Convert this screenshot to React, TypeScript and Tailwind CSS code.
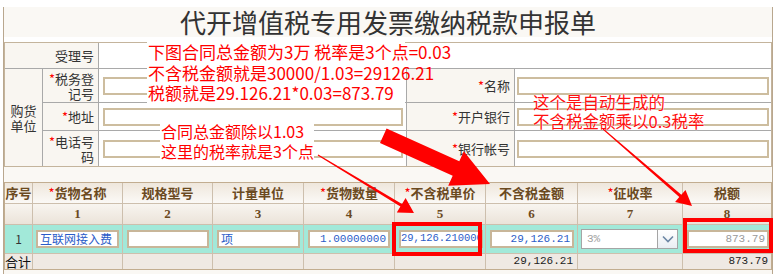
import React from "react";

const Star = () => <span className="text-[#ff0000] font-normal">*</span>;

const Label = ({ text, star, className = "" }: { text: string; star?: boolean; className?: string }) => (
  <div className={`bg-[#f9f6f1] flex items-center justify-end text-right pr-[4px] text-[13px] leading-[15px] text-[#333] ${className}`}>
    <span>
      {star && <Star />}
      {text}
    </span>
  </div>
);

const Field = ({ wide }: { wide?: boolean }) => (
  <div className={`bg-white flex items-center ${wide ? "pl-[2px] pr-[2px]" : "pl-[4px] pr-[3px]"}`}>
    <div className="h-[18px] w-full border-2 border-[#cdbd9f] bg-white" />
  </div>
);

const heads: [string, boolean][] = [
  ["序号", false],
  ["货物名称", true],
  ["规格型号", false],
  ["计量单位", false],
  ["货物数量", true],
  ["不含税单价", true],
  ["不含税金额", false],
  ["征收率", true],
  ["税额", false],
];

const Box = ({ children, className = "" }: { children?: React.ReactNode; className?: string }) => (
  <div
    className={`h-[18px] w-full border-2 border-[#c8b699] bg-white flex items-center overflow-hidden whitespace-nowrap px-[2px] ${className}`}
  >
    {children}
  </div>
);

const DataCell = ({ children, className = "" }: { children?: React.ReactNode; className?: string }) => (
  <div className={`bg-[#a2e9d9] flex items-center px-[3px] ${className}`}>{children}</div>
);

export default function App() {
  return (
    <div className="w-[775px] h-[274px] bg-white relative overflow-hidden font-['Noto_Sans_CJK_SC',sans-serif]">
      <div className="ml-[3px] w-[770px] h-[274px] border-l border-r border-[#b9a78e]">
        {/* title */}
        <div className="mt-[7px] h-[30px] bg-[#faf8f4] flex items-center justify-center text-[26px] text-[#333] leading-none">
          代开增值税专用发票缴纳税款申报单
        </div>

        {/* purchaser block */}
        <div className="mt-[5px] grid grid-cols-[37px_55px_307px_107px_256px] grid-rows-[25px_33px_27px_35px] gap-px bg-[#a9a9a9] border border-[#c4b49c]">
          <Label text="受理号" className="col-span-2" />
          <div className="col-span-3 bg-white" />

          <div className="row-span-3 bg-[#f9f6f1] flex items-center justify-center text-center text-[13px] leading-[15px] text-[#333] px-[5px]">
            购货单位
          </div>
          <Label text="税务登记号" star />
          <Field />
          <Label text="名称" star />
          <Field wide />

          <Label text="地址" star />
          <Field />
          <Label text="开户银行" star />
          <Field wide />

          <Label text="电话号码" star />
          <Field />
          <Label text="银行帐号" star />
          <Field wide />
        </div>

        <div className="h-[15px] bg-[#faf8f4]" />

        {/* goods table */}
        <div className="grid grid-cols-[27px_89px_89px_90px_90px_90px_91px_104px_88px] grid-rows-[20px_20px_28px_15px] gap-px bg-[#cdbfad] border border-[#c2ad90]">
          {heads.map(([t, s]) => (
            <div
              key={t}
              className="bg-linear-to-b from-[#efe7dc] to-[#fbf9f6] flex items-center justify-center text-[13px] font-bold text-[#6b4a1f] whitespace-nowrap"
            >
              {s && <Star />}
              {t}
            </div>
          ))}
          {["", "1", "2", "3", "4", "5", "6", "7", "8"].map((n, i) => (
            <div
              key={i}
              className="bg-linear-to-b from-[#f8f5f0] to-[#ebe3d9] flex items-center justify-center text-[13px] font-bold text-[#6b4a1f] font-['Liberation_Serif',serif]"
            >
              {n}
            </div>
          ))}

          <DataCell className="justify-center text-[12px] text-[#333]">1</DataCell>
          <DataCell>
            <Box className="text-[12px] text-[#2a5cc8]">互联网接入费</Box>
          </DataCell>
          <DataCell className="pl-[4px]">
            <Box />
          </DataCell>
          <DataCell className="pl-[4px]">
            <Box className="text-[12px] text-[#2a5cc8]">项</Box>
          </DataCell>
          <DataCell className="pl-[4px] pr-[4px]">
            <Box className="justify-end font-['Liberation_Mono',monospace] text-[11px] text-[#2a5cc8]">1.00000000</Box>
          </DataCell>
          <DataCell className="pl-[4px] pr-[2px]">
            <Box className="!px-0 font-['Liberation_Mono',monospace] text-[10.5px] text-[#2a5cc8]">29,126.210000</Box>
          </DataCell>
          <DataCell className="pl-[4px] pr-[3px]">
            <Box className="justify-end font-['Liberation_Mono',monospace] text-[11px] text-[#2a5cc8]">29,126.21</Box>
          </DataCell>
          <DataCell className="pl-[3px] pr-[4px]">
            <div className="h-[20px] w-full border border-[#a5a5a5] bg-white flex items-center">
              <span className="flex-1 pl-[5px] font-['Liberation_Mono',monospace] text-[11px] text-[#a0a0a0]">3%</span>
              <div className="w-[20px] h-full border-l border-[#a5a5a5] bg-linear-to-b from-white to-[#e9eef3] flex items-center justify-center">
                <svg width="12" height="8" viewBox="0 0 12 8">
                  <polyline points="1,1.5 6,6.5 11,1.5" fill="none" stroke="#6c86a4" strokeWidth="1.6" />
                </svg>
              </div>
            </div>
          </DataCell>
          <DataCell className="pl-[4px] pr-[2px]">
            <Box className="justify-end bg-[#efefef] font-['Liberation_Mono',monospace] text-[11px] text-[#9a9a9a]">873.79</Box>
          </DataCell>

          <div className="bg-[#efe9e3] flex items-center text-[13px] text-[#111] leading-none">合计</div>
          <div className="bg-[#efe9e3]" />
          <div className="bg-[#efe9e3]" />
          <div className="bg-[#efe9e3]" />
          <div className="bg-[#efe9e3]" />
          <div className="bg-[#efe9e3]" />
          <div className="bg-[#efe9e3] flex items-center justify-end pr-[4px] font-['Liberation_Mono',monospace] text-[11px] text-[#222]">
            29,126.21
          </div>
          <div className="bg-[#efe9e3]" />
          <div className="bg-[#efe9e3] flex items-center justify-end pr-[3px] font-['Liberation_Mono',monospace] text-[11px] text-[#222]">
            873.79
          </div>
        </div>
        <div className="h-[4px] bg-[#faf8f4]" />
      </div>

      {/* annotations */}
      <div className="absolute left-[147px] top-[42px] w-[258px] bg-white text-[17px] leading-[20.5px] text-[#ff0000] whitespace-nowrap pl-[1px]">
        <div>下图合同总金额为3万 税率是3个点=0.03</div>
        <div>不含税金额就是30000/1.03=29126.21</div>
        <div>税额就是29.126.21*0.03=873.79</div>
      </div>
      <div className="absolute left-[160px] top-[121px] bg-white text-[16px] leading-[20px] text-[#ff0000] whitespace-nowrap pl-[1px]">
        <div>合同总金额除以1.03</div>
        <div>这里的税率就是3个点</div>
      </div>
      <div className="absolute left-[533px] top-[93px] text-[16.5px] leading-[18.5px] text-[#ff1010] whitespace-nowrap [text-shadow:0_0_1px_#fff,0_0_1px_#fff]">
        <div>这个是自动生成的</div>
        <div>不含税金额乘以0.3税率</div>
      </div>

      <svg className="absolute left-0 top-0 pointer-events-none" width="775" height="274" viewBox="0 0 775 274">
        <polygon
          fill="#ff0000"
          points="386.6,128.5 459.3,161.2 463.8,151.2 490,184 448.2,185.8 452.7,175.8 380,143.1"
        />
        <polygon
          fill="#ff0000"
          points="318.3,154.6 402,203.9 405.6,197.9 414,213 396.8,212.5 400.4,206.5 317.7,155.4"
        />
        <polygon
          fill="#ff0000"
          points="603.3,128.6 681.3,194.8 685.5,189.9 692,206 675.1,201.9 679.3,197 602.7,129.4"
        />
        <rect x="394" y="224" width="86" height="30" fill="none" stroke="#ff0000" strokeWidth="4" />
        <rect x="685" y="220" width="86" height="31" fill="none" stroke="#ff0000" strokeWidth="4" />
      </svg>
    </div>
  );
}
